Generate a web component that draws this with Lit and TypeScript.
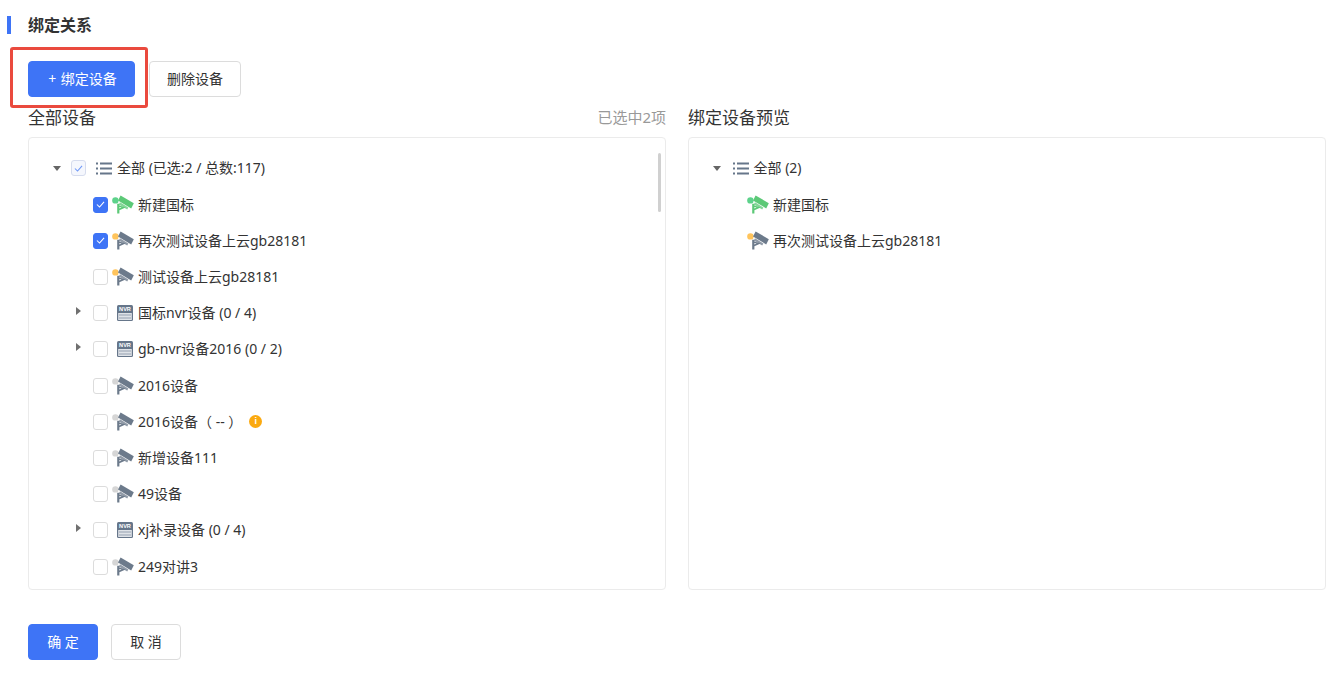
import { LitElement, html, css, svg } from "lit";
import { customElement } from "lit/decorators.js";

type Row = { label: string; icon: "cam" | "nvr"; dot?: string; body?: string; check?: boolean; expand?: boolean; info?: boolean };

const GREY = "#6c7a8b";
const GREEN = "#5cc977";
const DOT_G = "#5dd28b";
const DOT_Y = "#ffc45c";
const DOT_N = "#d6d6d6";

const rows: Row[] = [
  { label: "新建国标", icon: "cam", dot: DOT_G, body: GREEN, check: true },
  { label: "再次测试设备上云gb28181", icon: "cam", dot: DOT_Y, body: GREY, check: true },
  { label: "测试设备上云gb28181", icon: "cam", dot: DOT_Y, body: GREY },
  { label: "国标nvr设备 (0 / 4)", icon: "nvr", expand: true },
  { label: "gb-nvr设备2016 (0 / 2)", icon: "nvr", expand: true },
  { label: "2016设备", icon: "cam", dot: DOT_N, body: GREY },
  { label: "2016设备（ -- ）", icon: "cam", dot: DOT_N, body: GREY, info: true },
  { label: "新增设备111", icon: "cam", dot: DOT_N, body: GREY },
  { label: "49设备", icon: "cam", dot: DOT_N, body: GREY },
  { label: "xj补录设备 (0 / 4)", icon: "nvr", expand: true },
  { label: "249对讲3", icon: "cam", dot: DOT_N, body: GREY },
];

const cam = (dot: string, body: string) => html`<svg class="cam" viewBox="0 0 22 19" width="22" height="19">
  ${svg`<circle cx="3.4" cy="5.4" r="3.2" fill="${dot}"/>
  <path d="M8.6 0.4 L21.8 8.2 L19.2 13.4 L6 5.4 Z" fill="${body}"/>
  <path d="M8 7.2 L16.4 12.4 L15.2 14.6 L6.8 9.4 Z" fill="${body}" opacity="0.75"/>
  <path fill-rule="evenodd" d="M5.2 8.8 H7.4 V10.4 L13.6 12.6 L7.4 15.2 V18.6 H5.2 Z M7.4 12 V13.4 L9.6 12.6 Z" fill="${body}"/>`}
</svg>`;

const nvr = html`<svg class="nvr" viewBox="0 0 16 16" width="16" height="16">
  ${svg`<rect x="0" y="0" width="16" height="16" rx="1.5" fill="#66768a"/>
  <text x="8" y="6.4" font-size="5.6" font-weight="700" text-anchor="middle" fill="#fff" font-family="Liberation Sans, sans-serif">NVR</text>
  <rect x="1.2" y="8" width="13.6" height="7" fill="#dfe3e8"/>
  <path d="M2.4 10 H13.6 M2.4 13 H13.6" stroke="#66768a" stroke-width="1.2" stroke-dasharray="1.2 0.8"/>`}
</svg>`;

const listIcon = html`<svg class="list" viewBox="0 0 16 13" width="16" height="13">
  ${svg`<g fill="#66768a"><rect x="0" y="0.5" width="2" height="2"/><rect x="0" y="5.5" width="2" height="2"/><rect x="0" y="10.5" width="2" height="2"/>
  <rect x="4" y="0.5" width="12" height="2"/><rect x="4" y="5.5" width="12" height="2"/><rect x="4" y="10.5" width="12" height="2"/></g>`}
</svg>`;

const tick = html`<svg viewBox="0 0 16 16" width="15" height="15">${svg`<path d="M3.6 8 L6.8 11.2 L12.4 4.8" fill="none" stroke="currentColor" stroke-width="1.3"/>`}</svg>`;

@customElement("app-root")
export class AppRoot extends LitElement {
  static styles = css`
    :host { display: block; width: 1335px; height: 677px; overflow: hidden; background: #fff; position: relative;
      font-family: "Noto Sans", "Noto Sans CJK SC", sans-serif; font-size: 14px; color: #333; }
    .page { display: flex; flex-direction: column; padding: 14px 9px 0 28px; }
    .title { position: relative; height: 23px; line-height: 23px; font-size: 16px; font-weight: 700; color: #333; }
    .title::before { content: ""; position: absolute; left: -21px; top: 2px; width: 4px; height: 18px; background: #3e74f6; }
    .actions { display: flex; gap: 14px; margin-top: 24px; }
    .btn { box-sizing: border-box; height: 36px; display: flex; align-items: center; justify-content: center; border-radius: 4px;
      font-size: 14px; border: 1px solid #dcdcdc; background: #fff; color: #333; font-family: inherit; padding: 0 0 2px; }
    .primary { background: #3e74f6; border-color: #3e74f6; color: #fff; }
    .add { width: 107px; padding-left: 2px; word-spacing: 1px; }
    .del { width: 92px; }
    .columns { display: grid; grid-template-columns: 638px 638px; column-gap: 22px; }
    .head { box-sizing: border-box; height: 40px; padding-bottom: 2px; display: flex; justify-content: space-between; align-items: center; font-size: 17px; color: #333; }
    .count { font-size: 15px; color: #999; }
    .panel { box-sizing: border-box; height: 453px; border: 1px solid #ebebeb; border-radius: 4px; padding-top: 12.4px; position: relative; }
    .row { height: 36.2px; display: flex; align-items: center; white-space: nowrap; position: relative; }
    .row.child { padding-left: 64px; }
    .row.root { padding-left: 24px; }
    .arrow { width: 0; height: 0; flex: none; }
    .down { border-left: 4.5px solid transparent; border-right: 4.5px solid transparent; border-top: 5px solid #666; margin-right: 10.5px; margin-left: -0.5px; }
    .right { border-top: 4px solid transparent; border-bottom: 4px solid transparent; border-left: 5px solid #707070; position: absolute; left: 46.5px; top: 12px; }
    .cb { box-sizing: border-box; width: 15px; height: 16px; flex: none; border: 1px solid #dcdcdc; border-radius: 3px; background: #fff;
      display: flex; align-items: center; justify-content: center; color: #fff; }
    .cb.on { background: #3e74f6; border-color: #3e74f6; }
    .cb.half { background: #f5f7fd; border-color: #d6dcee; color: #6f98f7; }
    .cam { flex: none; margin-left: 4px; margin-top: -1px; }
    .nvr { flex: none; margin-left: 9px; margin-top: -1px; }
    .list { flex: none; margin-left: 10px; }
    .label { margin-left: 4px; padding-bottom: 2px; }
    .nvr + .label { margin-left: 5px; }
    .list + .label { margin-left: 5px; }
    .info { width: 13px; height: 13px; border-radius: 50%; background: #fba90f; color: #fff; font: 700 9px/13px "Liberation Sans", sans-serif; text-align: center; margin-left: 7px; flex: none; }
    .scroll { position: absolute; left: 629px; top: 15px; width: 3px; height: 59px; border-radius: 2px; background: #d0d0d0; }
    .preview .list { margin-left: 1.5px; }
    .preview .row.child { padding-left: 58px; }
    .preview .cam { margin-left: 0; }
    .footer { display: flex; gap: 13px; margin-top: 34px; }
    .ok, .cancel { width: 70px; }
    .mark { position: absolute; left: 10px; top: 47px; width: 138px; height: 61px; box-sizing: border-box; border: 3px solid #ea4a3e; border-radius: 3px; pointer-events: none; }
  `;

  render() {
    return html`
      <div class="page">
        <div class="title">绑定关系</div>
        <div class="actions">
          <button class="btn primary add">+ 绑定设备</button>
          <button class="btn del">删除设备</button>
        </div>
        <div class="columns">
          <section>
            <div class="head"><span>全部设备</span><span class="count">已选中2项</span></div>
            <div class="panel">
              <div class="row root">
                <span class="arrow down"></span>
                <span class="cb half">${tick}</span>
                ${listIcon}
                <span class="label">全部 (已选:2 / 总数:117)</span>
              </div>
              ${rows.map(
                (r) => html`<div class="row child">
                  ${r.expand ? html`<span class="arrow right"></span>` : ""}
                  <span class="cb ${r.check ? "on" : ""}">${r.check ? tick : ""}</span>
                  ${r.icon === "cam" ? cam(r.dot!, r.body!) : nvr}
                  <span class="label">${r.label}</span>
                  ${r.info ? html`<span class="info">i</span>` : ""}
                </div>`
              )}
              <div class="scroll"></div>
            </div>
          </section>
          <section class="preview">
            <div class="head"><span>绑定设备预览</span></div>
            <div class="panel">
              <div class="row root">
                <span class="arrow down"></span>
                ${listIcon}
                <span class="label">全部 (2)</span>
              </div>
              ${rows.slice(0, 2).map(
                (r) => html`<div class="row child">${cam(r.dot!, r.body!)}<span class="label">${r.label}</span></div>`
              )}
            </div>
          </section>
        </div>
        <div class="footer">
          <button class="btn primary ok">确 定</button>
          <button class="btn cancel">取 消</button>
        </div>
      </div>
      <div class="mark"></div>
    `;
  }
}
